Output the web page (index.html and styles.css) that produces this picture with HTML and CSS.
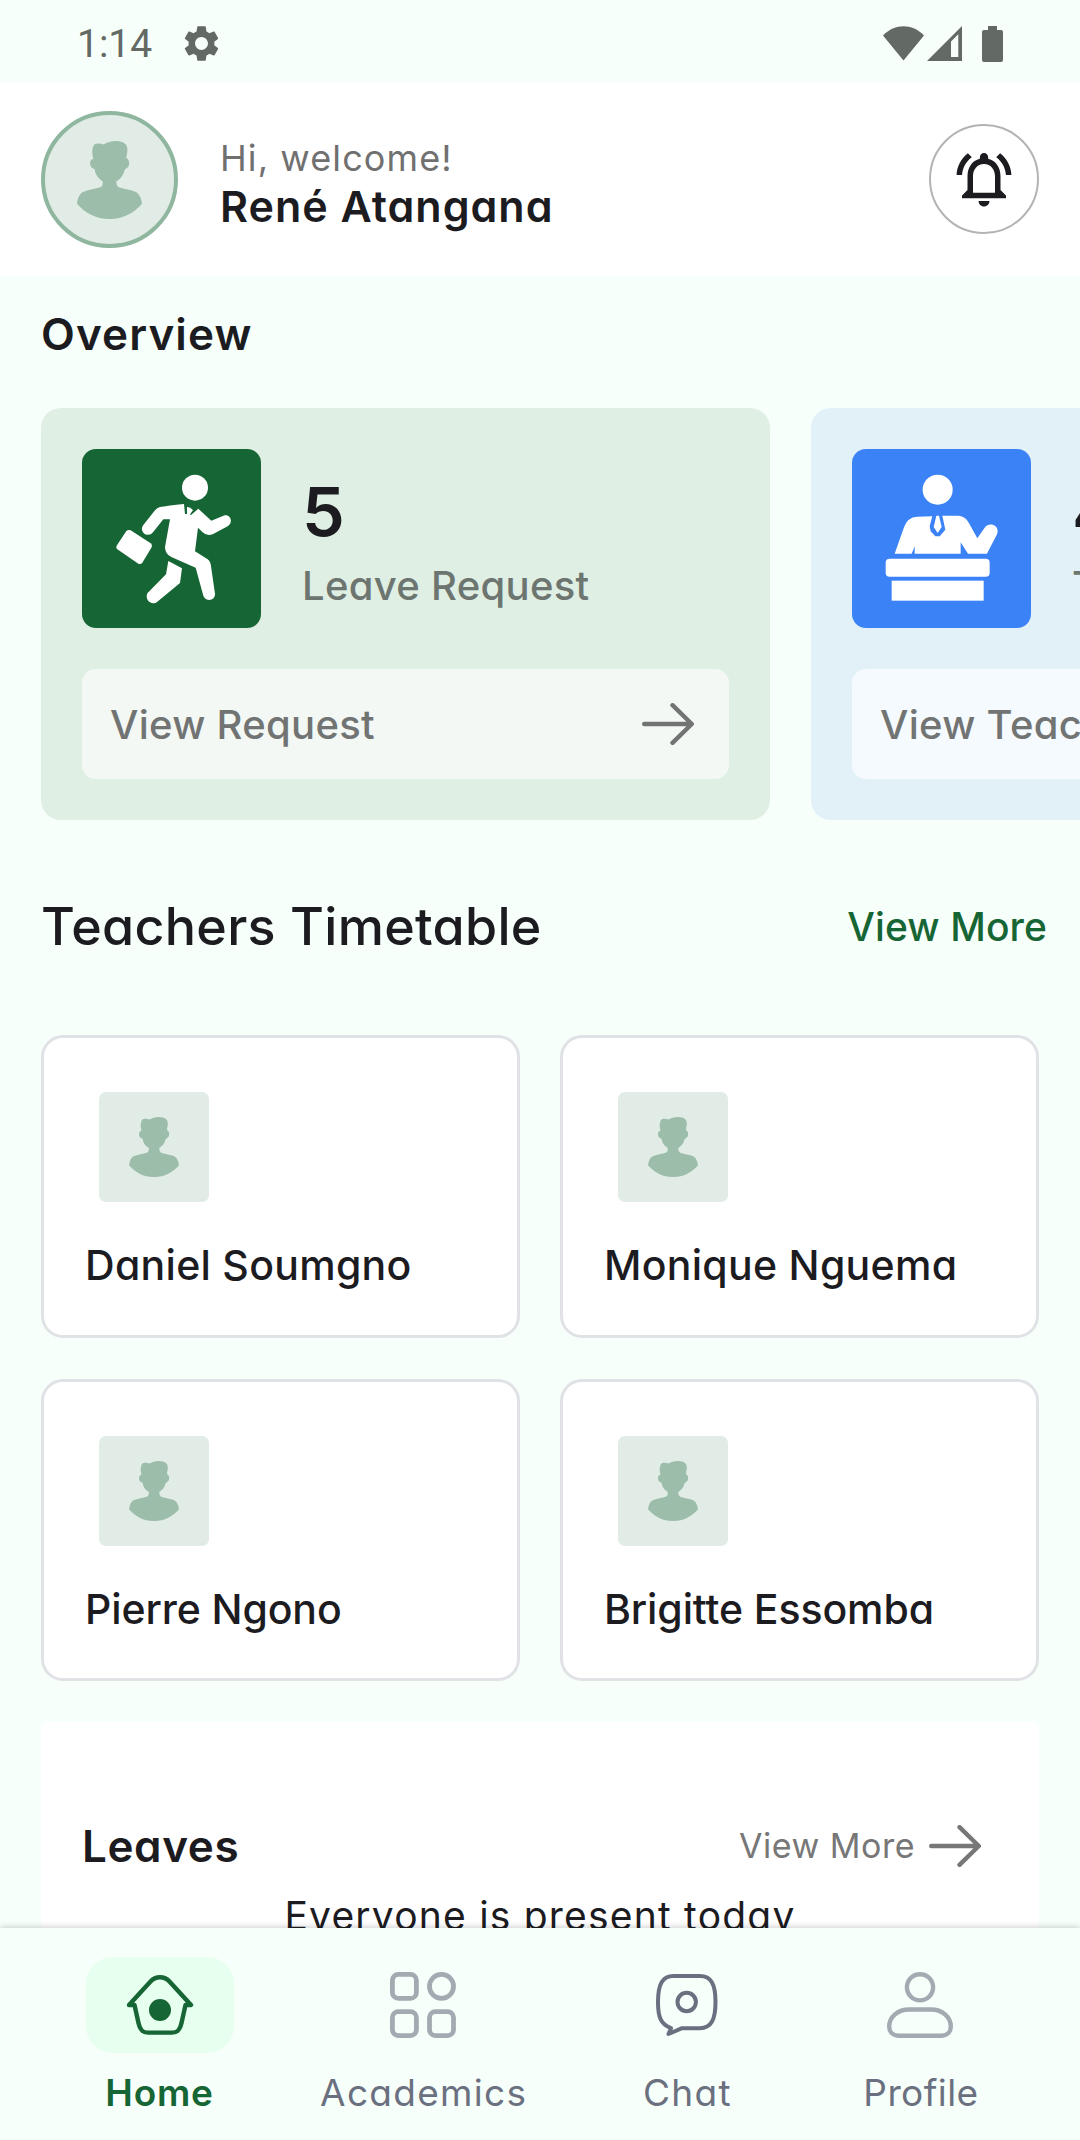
FILE: index.html
```html
<!DOCTYPE html>
<html lang="en">
<head>
    <meta charset="UTF-8">
    <meta name="viewport" content="width=device-width, initial-scale=1.0">
    <title>Home</title>
    <link rel="stylesheet" href="styles.css">
</head>
<body>
    <!-- Shared icons -->
    <svg class="icon-defs">
        <symbol id="icon-user" viewBox="108 87 195 234">
            <path d="M156 137C152 122 153 103 162 96C171 92 181 96 189 97C203 86 240 82 254 97C264 109 257 125 256 138C266 142 267 159 261 165C257 169 253 171 251 173C248 188 239 201 226 208C226 216 228 223 233 226C250 231 270 234 285 240C297 248 301 261 303 275C280 302 247 321 206 321C163 321 132 302 108 275C110 260 115 246 126 240C141 233 164 231 180 225C185 222 186 214 185 208C172 200 163 188 161 172C152 169 147 163 147 154C147 145 152 142 157 140Z"/>
        </symbol>
        <symbol id="icon-arrow" viewBox="0 0 52 42">
            <path d="M2.2 21H49.5M30.5 2.2L49.8 21L30.5 39.8" fill="none" stroke="currentColor" stroke-width="4.4" stroke-linecap="round" stroke-linejoin="round"/>
        </symbol>
    </svg>

    <div class="status-bar">
        <span class="status-time">1:14</span>
        <svg class="status-gear" viewBox="0 0 24 24"><path d="M19.14 12.94c.04-.3.06-.61.06-.94 0-.32-.02-.64-.07-.94l2.03-1.58c.18-.14.23-.41.12-.61l-1.92-3.32c-.12-.22-.37-.29-.59-.22l-2.39.96c-.5-.38-1.03-.7-1.62-.94l-.36-2.54c-.04-.24-.24-.41-.48-.41h-3.84c-.24 0-.43.17-.47.41l-.36 2.54c-.59.24-1.13.57-1.62.94l-2.39-.96c-.22-.08-.47 0-.59.22L2.74 8.87c-.12.21-.08.47.12.61l2.03 1.58c-.05.3-.09.63-.09.94s.02.64.07.94l-2.03 1.58c-.18.14-.23.41-.12.61l1.92 3.32c.12.22.37.29.59.22l2.39-.96c.5.38 1.03.7 1.62.94l.36 2.54c.05.24.24.41.48.41h3.84c.24 0 .44-.17.47-.41l.36-2.54c.59-.24 1.13-.56 1.62-.94l2.39.96c.22.08.47 0 .59-.22l1.92-3.32c.12-.22.07-.47-.12-.61l-2.01-1.58zM12 15.6c-1.98 0-3.6-1.62-3.6-3.6s1.62-3.6 3.6-3.6 3.6 1.62 3.6 3.6-1.62 3.6-3.6 3.6z"/></svg>
        <svg class="status-icons" viewBox="0 0 120 36">
            <path d="M0 9.5C12-2.8 29-2.8 41 9.5L20.5 34.5Z"/>
            <path fill-rule="evenodd" d="M44 35L79 0V35ZM68 15.6V31H75.3V8.3Z"/>
            <path d="M105 0h9v4h4a2 2 0 0 1 2 2v28a2 2 0 0 1-2 2h-17a2 2 0 0 1-2-2V6a2 2 0 0 1 2-2h4z"/>
        </svg>
    </div>

    <header class="header">
        <div class="avatar"><svg><use href="#icon-user"/></svg></div>
        <div class="greeting">
            <p class="greeting-text">Hi, welcome!</p>
            <p class="greeting-name">René Atangana</p>
        </div>
        <button class="bell">
            <svg viewBox="0 0 24 24"><path d="M12 22c1.1 0 2-.9 2-2h-4c0 1.1.9 2 2 2zm6-6v-5c0-3.07-1.63-5.64-4.5-6.32V4c0-.83-.67-1.5-1.5-1.5s-1.5.67-1.5 1.5v.68C7.64 5.36 6 7.92 6 11v5l-2 2v1h16v-1l-2-2zm-2 1H8v-6c0-2.48 1.51-4.5 4-4.5s4 2.02 4 4.5v6zM7.58 4.08L6.15 2.65C3.75 4.48 2.17 7.3 2.03 10.5h2c.15-2.65 1.51-4.97 3.55-6.42zm12.39 6.42h2c-.15-3.2-1.73-6.02-4.12-7.85l-1.42 1.43c2.02 1.45 3.39 3.77 3.54 6.42z"/></svg>
        </button>
    </header>

    <main class="content">
        <h2 class="overview-title">Overview</h2>

        <div class="overview">
            <div class="stat-card green">
                <div class="stat-top">
                    <div class="stat-icon">
                        <svg viewBox="0 0 537 537">
                            <circle cx="339" cy="116" r="39"/>
                            <path d="M232 175Q240 172 306 165L309 195H315V174Q325 173 333 184L323 197H328L349 179L388 215L428 199C447 196 454 222 437 232L392 256Q374 262 362 250L348 236L339 307L377 331Q386 338 387 352L399 434C400 456 372 460 364 440L341 356L268 324Q249 315 249 294L264 211H244L213 250C202 265 177 256 180 236Q182 229 187 224L219 184Q225 178 232 175Z"/>
                            <path d="M259 336L300 358L294 402L226 458C211 471 187 455 196 433L252 376Z"/>
                            <path d="M133 246Q139 241 146 244L206 283Q212 288 209 295L181 341Q176 347 169 344L105 300Q101 296 104 290Z"/>
                        </svg>
                    </div>
                    <div class="stat-info">
                        <p class="stat-number">5</p>
                        <p class="stat-label">Leave Request</p>
                    </div>
                </div>
                <a href="#" class="stat-link">View Request <svg class="arrow"><use href="#icon-arrow"/></svg></a>
            </div>

            <div class="stat-card blue">
                <div class="stat-top">
                    <div class="stat-icon">
                        <svg viewBox="0 0 537 537">
                            <circle cx="257" cy="122" r="45"/>
                            <path d="M128 314L156 235Q167 204 195 203L241 202L233 232L236 247L250 262H263L280 242L271 200H320Q341 201 352 224L376 268L398 236C410 219 437 226 437 247Q437 254 432 262L404 316L402 314H348L326 280V314H188V292L179 314Z"/>
                            <path d="M253 200H261L269 234L257 252L245 234Z"/>
                            <rect x="101" y="329" width="312" height="54" rx="12"/>
                            <rect x="119" y="395" width="276" height="60"/>
                        </svg>
                    </div>
                    <div class="stat-info">
                        <p class="stat-number">4</p>
                        <p class="stat-label">Teachers</p>
                    </div>
                </div>
                <a href="#" class="stat-link">View Teachers <svg class="arrow"><use href="#icon-arrow"/></svg></a>
            </div>
        </div>

        <div class="section-head">
            <h2>Teachers Timetable</h2>
            <a href="#">View More</a>
        </div>

        <div class="teachers">
            <div class="teacher-card">
                <div class="thumb"><svg><use href="#icon-user"/></svg></div>
                <p class="teacher-name">Daniel Soumgno</p>
            </div>
            <div class="teacher-card">
                <div class="thumb"><svg><use href="#icon-user"/></svg></div>
                <p class="teacher-name">Monique Nguema</p>
            </div>
            <div class="teacher-card">
                <div class="thumb"><svg><use href="#icon-user"/></svg></div>
                <p class="teacher-name">Pierre Ngono</p>
            </div>
            <div class="teacher-card">
                <div class="thumb"><svg><use href="#icon-user"/></svg></div>
                <p class="teacher-name">Brigitte Essomba</p>
            </div>
        </div>

        <div class="leaves">
            <div class="leaves-head">
                <h3>Leaves</h3>
                <a href="#">View More <svg class="arrow"><use href="#icon-arrow"/></svg></a>
            </div>
            <p class="leaves-text">Everyone is present today</p>
        </div>
    </main>

    <nav class="bottom-nav">
        <a href="#" class="nav-item active">
            <span class="nav-icon">
                <svg width="80" height="80" viewBox="0 0 80 80">
                    <path d="M9 40L30.5 16.5C35.5 10.8 44.5 10.8 49.5 16.5L71 40H65.5L61.5 58C60 65 57.5 67.6 52 67.6H28C22.5 67.6 20 65 18.5 58L14.5 40Z" fill="none" stroke="currentColor" stroke-width="4.4" stroke-linejoin="round"/>
                    <circle cx="40" cy="45" r="11" fill="currentColor"/>
                </svg>
            </span>
            <span class="nav-label">Home</span>
        </a>
        <a href="#" class="nav-item">
            <span class="nav-icon light">
                <svg width="66" height="66" viewBox="0 0 66 66" fill="none" stroke="currentColor" stroke-width="4.8">
                    <rect x="2.4" y="2.4" width="24" height="24" rx="6"/>
                    <circle cx="51.5" cy="14.4" r="12"/>
                    <rect x="2.4" y="39.6" width="24" height="24" rx="6"/>
                    <rect x="39.5" y="39.6" width="24" height="24" rx="6"/>
                </svg>
            </span>
            <span class="nav-label">Academics</span>
        </a>
        <a href="#" class="nav-item">
            <span class="nav-icon">
                <svg width="62" height="62" viewBox="0 0 62 62" fill="none" stroke="currentColor" stroke-width="4" stroke-linejoin="round">
                    <path d="M26 54.2H44C55 54.2 59.5 46 59.5 28C59.5 10 55 2 44 2H17.5C6.5 2 2 10 2 28C2 43 4.5 50 15 54.2L12.5 60Z"/>
                    <circle cx="30.7" cy="28" r="9.2"/>
                </svg>
            </span>
            <span class="nav-label">Chat</span>
        </a>
        <a href="#" class="nav-item">
            <span class="nav-icon light">
                <svg width="66" height="66" viewBox="0 0 66 66" fill="none" stroke="currentColor" stroke-width="4.4">
                    <circle cx="33" cy="15.3" r="13.1"/>
                    <path d="M22 37.5H44C55 37.5 63.8 45 63.8 54.5C63.8 60 60 63.7 54 63.7H12C6 63.7 2.2 60 2.2 54.5C2.2 45 11 37.5 22 37.5Z"/>
                </svg>
            </span>
            <span class="nav-label">Profile</span>
        </a>
    </nav>
</body>
</html>
```

FILE: styles.css
```css
* {
    box-sizing: border-box;
    margin: 0;
    padding: 0;
}

body {
    height: 2140px;
    display: flex;
    flex-direction: column;
    overflow: hidden;
    background-color: #f6fffa;
    color: #1c1b1f;
    font-family: "Inter", sans-serif;
    font-feature-settings: "cv11";
}

a {
    color: inherit;
    text-decoration: none;
}

svg {
    display: block;
    flex-shrink: 0;
}

.icon-defs {
    display: none;
}

.arrow {
    width: 52px;
    height: 42px;
}

/* Status bar */
.status-bar {
    flex-shrink: 0;
    height: 83px;
    padding: 4px 77px 0 77px;
    display: flex;
    align-items: center;
    color: #636965;
    fill: #636965;
}

.status-time {
    font-family: Roboto, sans-serif;
    font-size: 39px;
    line-height: 46px;
}

.status-gear {
    width: 43px;
    height: 43px;
    margin-left: 28px;
}

.status-icons {
    width: 120px;
    height: 36px;
    margin-left: auto;
}

/* Header */
.header {
    flex-shrink: 0;
    height: 193px;
    padding: 0 41px;
    display: flex;
    align-items: center;
    background-color: #fff;
}

.avatar {
    width: 137px;
    height: 137px;
    display: flex;
    align-items: center;
    justify-content: center;
    border: 4px solid #8fb69e;
    border-radius: 50%;
    background-color: #e2ece6;
}

.avatar svg {
    width: 65px;
    height: 78px;
    fill: #9bbdaa;
}

.greeting {
    padding: 5px 0 0 42px;
    line-height: 48px;
}

.greeting-text {
    font-size: 36px;
    letter-spacing: 1.1px;
    color: #707070;
}

.greeting-name {
    font-size: 43px;
    font-weight: 560;
    letter-spacing: 1px;
}

.bell {
    width: 110px;
    height: 110px;
    margin: 0 0 1px auto;
    display: flex;
    align-items: center;
    justify-content: center;
    border: 2px solid #b3b3b3;
    border-radius: 50%;
    background: none;
}

.bell svg {
    width: 66px;
    height: 66px;
    fill: #1c1b1f;
}

/* Content */
.content {
    flex: 1;
    min-height: 0;
    overflow: hidden;
}

.overview-title {
    padding: 31px 0 47px 41px;
    font-size: 44px;
    font-weight: 560;
    line-height: 54px;
    letter-spacing: 1.1px;
}

.overview {
    display: flex;
    gap: 41px;
    padding-left: 41px;
}

.stat-card {
    flex: 0 0 729px;
    height: 412px;
    padding: 41px;
    border-radius: 20px;
}

.stat-card.green {
    background-color: #e0efe4;
}

.stat-card.blue {
    background-color: #e2f0f8;
}

.stat-top {
    display: flex;
    gap: 41px;
}

.stat-icon {
    width: 179px;
    height: 179px;
    border-radius: 14px;
    fill: #fff;
}

.green .stat-icon {
    background-color: #166534;
}

.blue .stat-icon {
    background-color: #3b82f6;
}

.stat-info {
    padding-top: 17px;
}

.stat-number {
    font-size: 68px;
    font-weight: 580;
    line-height: 90px;
}

.stat-label {
    font-size: 40px;
    font-weight: 520;
    line-height: 60px;
    letter-spacing: 0.3px;
    color: #6c756f;
}

.stat-link {
    height: 110px;
    margin-top: 41px;
    padding: 0 35px 0 28px;
    display: flex;
    align-items: center;
    justify-content: space-between;
    border-radius: 14px;
    font-size: 40px;
    font-weight: 520;
    letter-spacing: 0.3px;
    color: #717473;
}

.green .stat-link {
    background-color: #f3f8f5;
}

.blue .stat-link {
    background-color: #f5faff;
}

.section-head {
    display: flex;
    justify-content: space-between;
    padding: 77px 33px 78px 41px;
    line-height: 60px;
}

.section-head h2 {
    font-size: 52px;
    font-weight: 550;
    letter-spacing: 0.3px;
}

.section-head a {
    font-size: 39px;
    font-weight: 550;
    letter-spacing: 0.1px;
    color: #166534;
}

/* Teachers */
.teachers {
    display: grid;
    grid-template-columns: 1fr 1fr;
    gap: 41px 40px;
    padding: 0 41px;
}

.teacher-card {
    height: 302.5px;
    padding: 54px 39px 0 41px;
    border: 3px solid #e1e2e6;
    border-radius: 22px;
    background-color: #fff;
}

.thumb {
    width: 110px;
    height: 110px;
    margin-left: 14px;
    display: flex;
    align-items: center;
    justify-content: center;
    border-radius: 7px;
    background-color: #e2ece6;
}

.thumb svg {
    width: 50px;
    height: 60px;
    fill: #9bbdaa;
}

.teacher-name {
    margin-top: 33px;
    font-size: 41px;
    font-weight: 530;
    line-height: 60px;
    letter-spacing: 0.3px;
}

.teacher-card:nth-child(n+3) .teacher-name {
    letter-spacing: -0.1px;
}

/* Leaves */
.leaves {
    height: 500px;
    margin: 41px 41px 0;
    padding: 94px 58px 0 41px;
    border-radius: 6px;
    background-color: #fff;
}

.leaves-head {
    display: flex;
    align-items: center;
    justify-content: space-between;
    line-height: 60px;
}

.leaves-head h3 {
    font-size: 44px;
    font-weight: 570;
    letter-spacing: 0.6px;
}

.leaves-head a {
    display: flex;
    align-items: center;
    gap: 14px;
    font-size: 34px;
    letter-spacing: 0.5px;
    color: #777;
}

.leaves-text {
    margin: 10px -17px 0 0;
    font-size: 39px;
    line-height: 60px;
    letter-spacing: 1.2px;
    text-align: center;
}

/* Bottom nav */
.bottom-nav {
    position: relative;
    flex-shrink: 0;
    height: 212px;
    padding-top: 29px;
    display: flex;
    justify-content: space-evenly;
    background-color: #f6fffa;
    box-shadow: 0 0 7px rgba(0, 0, 0, 0.25);
}

.nav-item {
    min-width: 148px;
    display: flex;
    flex-direction: column;
    align-items: center;
    color: #6b7080;
}

.nav-icon {
    width: 148px;
    height: 96px;
    display: flex;
    align-items: center;
    justify-content: center;
    border-radius: 27px;
}

.nav-icon.light {
    color: #a3aab1;
}

.nav-label {
    margin-top: 15px;
    padding-left: 1px;
    font-size: 37px;
    line-height: 50px;
    letter-spacing: 1.3px;
}

.nav-item:last-child .nav-label {
    letter-spacing: 0.4px;
}

.active {
    color: #166534;
}

.active .nav-icon {
    background-color: #e6ffee;
}

.active .nav-label {
    padding-left: 0;
    font-weight: 600;
    letter-spacing: 0.8px;
}
```
